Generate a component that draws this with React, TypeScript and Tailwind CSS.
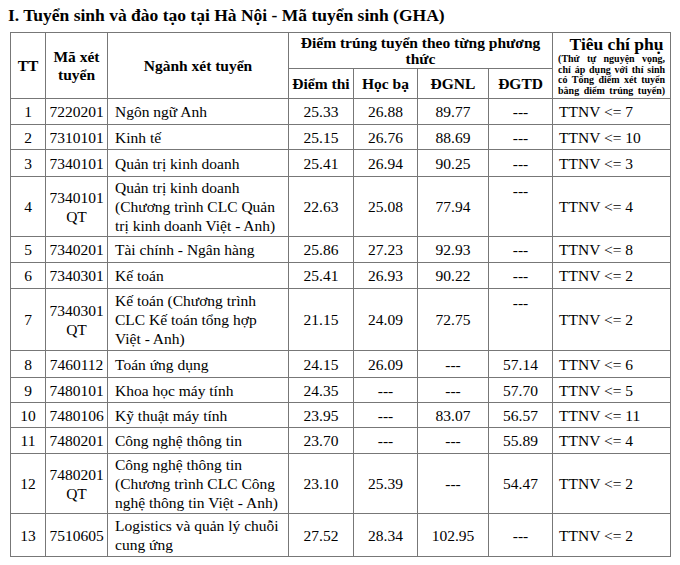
import React from "react";

type Row = {
  tt: string;
  code: string[];
  name: string[];
  thi: string;
  hb: string;
  dgnl: string;
  dgtd: string;
  dgtdTop?: boolean;
  tc: string;
  h: string;
};

const rows: Row[] = [
  { tt: "1", code: ["7220201"], name: ["Ngôn ngữ Anh"], thi: "25.33", hb: "26.88", dgnl: "89.77", dgtd: "---", tc: "TTNV <= 7", h: "h-[26px]" },
  { tt: "2", code: ["7310101"], name: ["Kinh tế"], thi: "25.15", hb: "26.76", dgnl: "88.69", dgtd: "---", tc: "TTNV <= 10", h: "h-[25px]" },
  { tt: "3", code: ["7340101"], name: ["Quản trị kinh doanh"], thi: "25.41", hb: "26.94", dgnl: "90.25", dgtd: "---", tc: "TTNV <= 3", h: "h-[27px]" },
  { tt: "4", code: ["7340101", "QT"], name: ["Quản trị kinh doanh", "(Chương trình CLC Quản", "trị kinh doanh Việt - Anh)"], thi: "22.63", hb: "25.08", dgnl: "77.94", dgtd: "---", dgtdTop: true, tc: "TTNV <= 4", h: "h-[60px]" },
  { tt: "5", code: ["7340201"], name: ["Tài chính - Ngân hàng"], thi: "25.86", hb: "27.23", dgnl: "92.93", dgtd: "---", tc: "TTNV <= 8", h: "h-[26px]" },
  { tt: "6", code: ["7340301"], name: ["Kế toán"], thi: "25.41", hb: "26.93", dgnl: "90.22", dgtd: "---", tc: "TTNV <= 2", h: "h-[26px]" },
  { tt: "7", code: ["7340301", "QT"], name: ["Kế toán (Chương trình", "CLC Kế toán tổng hợp", "Việt - Anh)"], thi: "21.15", hb: "24.09", dgnl: "72.75", dgtd: "---", dgtdTop: true, tc: "TTNV <= 2", h: "h-[62px]" },
  { tt: "8", code: ["7460112"], name: ["Toán ứng dụng"], thi: "24.15", hb: "26.09", dgnl: "---", dgtd: "57.14", tc: "TTNV <= 6", h: "h-[27px]" },
  { tt: "9", code: ["7480101"], name: ["Khoa học máy tính"], thi: "24.35", hb: "---", dgnl: "---", dgtd: "57.70", tc: "TTNV <= 5", h: "h-[25px]" },
  { tt: "10", code: ["7480106"], name: ["Kỹ thuật máy tính"], thi: "23.95", hb: "---", dgnl: "83.07", dgtd: "56.57", tc: "TTNV <= 11", h: "h-[25px]" },
  { tt: "11", code: ["7480201"], name: ["Công nghệ thông tin"], thi: "23.70", hb: "---", dgnl: "---", dgtd: "55.89", tc: "TTNV <= 4", h: "h-[26px]" },
  { tt: "12", code: ["7480201", "QT"], name: ["Công nghệ thông tin", "(Chương trình CLC Công", "nghệ thông tin Việt - Anh)"], thi: "23.10", hb: "25.39", dgnl: "---", dgtd: "54.47", tc: "TTNV <= 2", h: "h-[60px]" },
  { tt: "13", code: ["7510605"], name: ["Logistics và quản lý chuỗi", "cung ứng"], thi: "27.52", hb: "28.34", dgnl: "102.95", dgtd: "---", tc: "TTNV <= 2", h: "h-[43px]" },
];

const cell = "border border-[#777777] p-0";

export default function App() {
  return (
    <div className="w-[680px] h-[565px] bg-white text-black overflow-hidden font-['Liberation_Serif','Tinos','DejaVu_Serif',serif]">
      <div className="h-[32px] pl-[8px] pt-[3px] text-[17.5px] font-bold leading-[24px] whitespace-nowrap">
        I. Tuyển sinh và đào tạo tại Hà Nội - Mã tuyển sinh (GHA)
      </div>
      <table className="ml-[10px] w-[660px] table-fixed border-collapse">
        <colgroup>
          <col className="w-[35px]" />
          <col className="w-[62px]" />
          <col className="w-[181px]" />
          <col className="w-[65px]" />
          <col className="w-[64px]" />
          <col className="w-[71px]" />
          <col className="w-[64px]" />
          <col className="w-[118px]" />
        </colgroup>
        <thead>
          <tr className="h-[36px] text-[15.5px] font-bold leading-[18px]">
            <th rowSpan={2} className={`${cell} text-center align-middle`}>TT</th>
            <th rowSpan={2} className={`${cell} text-center align-middle`}>
              Mã xét
              <br />
              tuyển
            </th>
            <th rowSpan={2} className={`${cell} text-center align-middle`}>Ngành xét tuyển</th>
            <th colSpan={4} className={`${cell} text-center align-middle leading-[16px]`}>
              Điểm trúng tuyển theo từng phương
              <br />
              thức
            </th>
            <th rowSpan={2} className={`${cell} align-top pt-[1px] pl-[5px] pr-[5px]`}>
              <div className="text-center text-[17.5px] leading-[20px] pl-[10px]">Tiêu chí phụ</div>
              <div className="text-[10px] leading-[10.7px] font-bold">
                <div className="text-justify [text-align-last:justify]">(Thứ tự nguyện vọng,</div>
                <div className="text-justify [text-align-last:justify]">chỉ áp dụng với thí sinh</div>
                <div className="text-justify [text-align-last:justify]">có Tổng điểm xét tuyển</div>
                <div className="text-justify [text-align-last:justify]">bằng điểm trúng tuyển)</div>
              </div>
            </th>
          </tr>
          <tr className="h-[30px] text-[15.5px] font-bold leading-[18px]">
            <th className={`${cell} text-center align-middle whitespace-nowrap`}>Điểm thi</th>
            <th className={`${cell} text-center align-middle`}>Học bạ</th>
            <th className={`${cell} text-center align-middle`}>ĐGNL</th>
            <th className={`${cell} text-center align-middle`}>ĐGTD</th>
          </tr>
        </thead>
        <tbody className="text-[15.5px] leading-[19px]">
          {rows.map((r) => (
            <tr key={r.tt} className={r.h}>
              <td className={`${cell} text-center align-middle`}>{r.tt}</td>
              <td className={`${cell} text-center align-middle`}>
                {r.code.map((c, i) => (
                  <div key={i}>{c}</div>
                ))}
              </td>
              <td className={`${cell} pl-[7px] align-middle whitespace-nowrap`}>
                {r.name.map((n, i) => (
                  <div key={i}>{n}</div>
                ))}
              </td>
              <td className={`${cell} text-center align-middle`}>{r.thi}</td>
              <td className={`${cell} text-center align-middle`}>{r.hb}</td>
              <td className={`${cell} text-center align-middle`}>{r.dgnl}</td>
              <td className={`${cell} text-center ${r.dgtdTop ? "align-top pt-[4px]" : "align-middle"}`}>{r.dgtd}</td>
              <td className={`${cell} pl-[6px] align-middle whitespace-nowrap`}>{r.tc}</td>
            </tr>
          ))}
        </tbody>
      </table>
    </div>
  );
}
